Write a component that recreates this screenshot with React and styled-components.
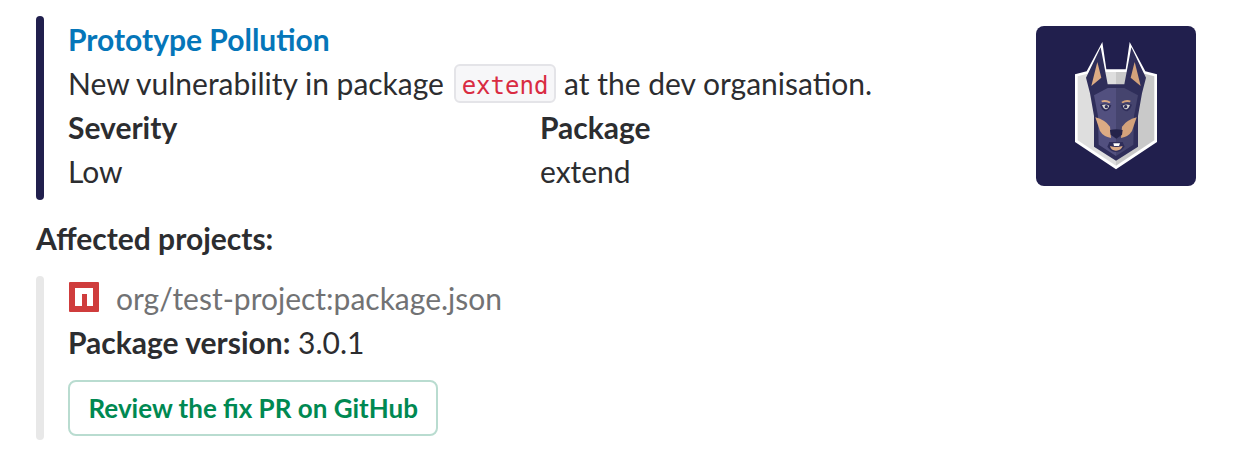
import styled, {createGlobalStyle} from "styled-components";

const GlobalStyle = createGlobalStyle`
    body {
        margin: 0;
        background: #ffffff;
        font-family: Lato, "Liberation Sans", sans-serif;
        color: #2c2d30;
    }
`;

const Page = styled.div`
    width: 1246px;
    height: 456px;
    box-sizing: border-box;
    padding: 16px 50px 0 36px;
    font-size: 30px;
    line-height: 44px;
`;

const Attachment = styled.div`
    display: flex;
    gap: 24px;
`;

const Bar = styled.div`
    flex: none;
    width: 8px;
    border-radius: 8px;
    background: ${(p) => p.$color};
`;

const Body = styled.div`
    flex: 1;
    display: flex;
    justify-content: space-between;
    padding: 1px 0 7px;
`;

const Title = styled.a`
    display: block;
    color: #0576b9;
    font-weight: 700;
`;

const Code = styled.code`
    display: inline-block;
    margin: -4px 0 -4px 2px;
    padding: 0 6px;
    height: 39px;
    line-height: 41px;
    box-sizing: border-box;
    border: 2px solid #e4e4e8;
    border-radius: 6px;
    background: #f7f7f9;
    color: #d92b42;
    font-family: "DejaVu Sans Mono", monospace;
    font-size: 24px;
    vertical-align: 1px;
`;

const Fields = styled.div`
    display: grid;
    grid-template-columns: 472px 1fr;
`;

const Label = styled.div`
    font-weight: 700;
`;

const Thumb = styled.svg`
    flex: none;
    width: 160px;
    height: 160px;
    margin-top: 9px;
`;

const Heading = styled.div`
    margin-top: 16px;
    font-weight: 700;
`;

const Projects = styled(Attachment)`
    margin-top: 16px;
`;

const ProjectRow = styled.div`
    display: flex;
    align-items: center;
    gap: 17px;
    height: 44px;
    color: #717274;
`;

const NpmIcon = styled.svg`
    width: 30px;
    height: 30px;
    margin: -2px 0 0 1px;
`;

const Strong = styled.strong`
    font-weight: 700;
`;

const Button = styled.button`
    display: block;
    margin: 16px 0 4px;
    height: 56px;
    padding: 0 18.5px;
    background: #ffffff;
    border: 2px solid #b9dcd0;
    border-radius: 8px;
    color: #008952;
    font: 700 26px Lato, sans-serif;
`;

function SnykLogo() {
    return (
        <Thumb viewBox="30 30 480 480">
            <rect x="30" y="30" width="480" height="480" rx="24" fill="#211f4d" />
            <path d="M147 175L182 166L229 78L241 160H299L311 78L358 166L393 175V378L270 460L147 378Z" fill="#fff" />
            <path d="M155 181L190 172L244 168H270V449L155 373Z" fill="#dedede" />
            <path d="M270 168H296L350 172L385 181V373L270 449Z" fill="#c9c9c9" />
            <path d="M224 94L245 205H295L316 94L360 185L348 232L336 300L336 392L270 434L204 392L204 300L192 232L180 185Z" fill="#2f2e5a" />
            <path d="M214 138L196 210L226 185Z" fill="#dcab84" />
            <path d="M326 138L344 210L314 185Z" fill="#d3a27b" />
            <path d="M245 216H270V420L218 386L216 300L204 238Z" fill="#52507f" />
            <path d="M295 216H270V420L322 386L324 300L336 238Z" fill="#45446e" />
            <path d="M208 304Q238 312 252 332L255 366Q232 362 222 345Z" fill="#dcab84" />
            <path d="M332 304Q302 312 288 332L285 366Q308 362 318 345Z" fill="#d3a27b" />
            <path d="M222 266Q240 258 256 268Q250 286 236 286Q226 280 222 266Z" fill="#2f2e5a" />
            <path d="M318 266Q300 258 284 268Q290 286 304 286Q314 280 318 266Z" fill="#2f2e5a" />
            <path d="M228 267Q240 263 250 269Q246 280 238 280Q231 276 228 267Z" fill="#dfddd6" />
            <path d="M312 267Q300 263 290 269Q294 280 302 280Q309 276 312 267Z" fill="#dfddd6" />
            <circle cx="241" cy="272" r="5" fill="#2f2e5a" />
            <circle cx="299" cy="272" r="5" fill="#2f2e5a" />
            <path d="M226 254Q240 248 254 258L250 262Q240 256 228 259Z" fill="#dcab84" />
            <path d="M314 254Q300 248 286 258L290 262Q300 256 312 259Z" fill="#d3a27b" />
            <path d="M252 342Q270 337 290 342L288 356L271 368L254 356Z" fill="#24234a" />
            <path d="M250 378H290L296 392Q285 408 270 408Q255 408 244 392Z" fill="#2f2e5a" />
            <path d="M252 390Q270 396 290 390Q285 404 270 404Q255 404 252 390Z" fill="#dcab84" />
            <path d="M262 382H282L279 390H264Z" fill="#fff" />
        </Thumb>
    );
}

function App() {
    return (
        <Page>
            <GlobalStyle />
            <Attachment>
                <Bar $color="#211f4d" />
                <Body>
                    <div>
                        <Title>Prototype Pollution</Title>
                        <div>
                            New vulnerability in package <Code>extend</Code> at the dev organisation.
                        </div>
                        <Fields>
                            <Label>Severity</Label>
                            <Label>Package</Label>
                            <div>Low</div>
                            <div>extend</div>
                        </Fields>
                    </div>
                    <SnykLogo />
                </Body>
            </Attachment>
            <Heading>Affected projects:</Heading>
            <Projects>
                <Bar $color="#e8e8e8" />
                <div>
                    <ProjectRow>
                        <NpmIcon viewBox="0 0 30 30">
                            <rect width="30" height="30" rx="1" fill="#cf3c3c" />
                            <path d="M6 6H24V24H18V12H13V24H6Z" fill="#fff" />
                        </NpmIcon>
                        org/test-project:package.json
                    </ProjectRow>
                    <div>
                        <Strong>Package version:</Strong> 3.0.1
                    </div>
                    <Button>Review the fix PR on GitHub</Button>
                </div>
            </Projects>
        </Page>
    );
}

export default App;
